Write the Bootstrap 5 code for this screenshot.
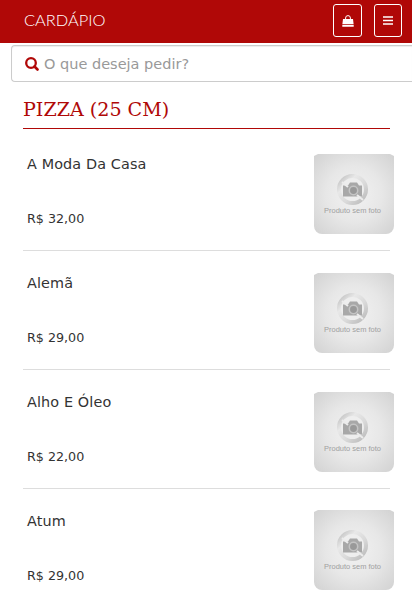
<!DOCTYPE html>
<html lang="pt-BR">
<head>
<meta charset="utf-8">
<meta name="viewport" content="width=device-width, initial-scale=1">
<title>Cardápio</title>
<link href="https://cdn.jsdelivr.net/npm/bootstrap@5.3.0/dist/css/bootstrap.min.css" rel="stylesheet">
<style>
  body { font-family: "DejaVu Sans", sans-serif; color: #333; overflow: hidden; height: 596px; }
  .topbar { background: #b00807; height: 43px; padding: 4px 10px 0 24px; }
  .tool-btn { height: 33px; border: 1px solid #fff; border-radius: 3px; padding: 0; }
  .tool-bag { width: 29px; }
  .tool-menu { width: 28px; }
  .search-box { margin: 2px 0 0 11px; height: 37px; border: 1px solid #ccc; border-right: 0; border-radius: 4px 0 0 4px; padding-left: 13px; box-shadow: inset 0 1px 1px rgba(0,0,0,.075); }
  .search-box input { font-size: 14.5px; color: #999; height: 33px; padding: 0 0 0 5px; line-height: 20px; }
  .search-box input::placeholder { color: #999; opacity: 1; }
  .menu-list { margin: 13px 22px 0 23px; }
  .group-title { font: 400 19.1px/29px "DejaVu Serif", serif; color: #b00807; height: 34px; border-bottom: 1px solid #b00807; margin: 0; }
  .dish { height: 119px; border-bottom: 1px solid #ddd; padding: 22px 0 0 4px; }
  .dish:first-of-type { height: 122px; padding-top: 25px; }
  .dish:last-of-type { padding-top: 21px; }
  .dish:last-of-type .dish-name { margin-top: 1px; }
  .dish-name { font-size: 14.4px; line-height: 20px; letter-spacing: .12px; }
  .dish-price { font-size: 12.7px; line-height: 18px; margin-top: 36px; }
  .dish-photo { width: 80px; height: 80px; margin-right: -4px; }
</style>
</head>
<body class="bg-white">
<svg class="position-absolute" width="0" height="0">
  <defs>
    <radialGradient id="bg" cx=".5" cy=".5" r=".7"><stop offset="0" stop-color="#f2f2f2"/><stop offset=".5" stop-color="#e7e7e7"/><stop offset="1" stop-color="#d2d2d2"/></radialGradient>
    <linearGradient id="ring" x1="0" y1="0" x2="1" y2="1"><stop offset="0" stop-color="#bcbcbc"/><stop offset=".3" stop-color="#e8e8e8"/><stop offset=".6" stop-color="#dadada"/><stop offset="1" stop-color="#b8b8b8"/></linearGradient>
    <filter id="soft"><feGaussianBlur stdDeviation=".5"/></filter>
  </defs>
  <symbol id="nophoto" viewBox="0 0 80 80">
    <path d="M4 0h72l4 2v70a8 8 0 0 1-8 8H8a8 8 0 0 1-8-8V2z" fill="url(#bg)"/>
    <g filter="url(#soft)">
      <circle cx="38.5" cy="35.5" r="13.5" fill="#eee" stroke="url(#ring)" stroke-width="4"/>
      <path d="M29 31.500h5l2-3h7l2 3h3v11H29z" fill="#a8a8a8"/>
      <circle cx="39.500" cy="36.500" r="4.200" fill="#999" stroke="#c4c4c4" stroke-width="1.500"/>
      <path d="M28 28l6 5M43 41l6 5" stroke="#ececec" stroke-width="2"/>
    </g>
    <text x="10" y="58.500" font-family="Liberation Sans, sans-serif" font-size="7.300" fill="#a0a0a0" textLength="57" lengthAdjust="spacingAndGlyphs">Produto sem foto</text>
  </symbol>
</svg>

<header class="topbar d-flex align-items-start">
  <svg class="me-auto" width="84" height="33" role="img" aria-label="Cardápio"><text x="0" y="22.200" font-family="Lato, sans-serif" font-weight="300" font-size="15" fill="#fff" textLength="81.500" lengthAdjust="spacingAndGlyphs">CARDÁPIO</text></svg>
  <button class="tool-btn tool-bag bg-transparent d-flex justify-content-center align-items-center me-2" aria-label="Sacola">
    <svg width="12" height="12" viewBox="0 0 12 12"><path d="M1 4h10l.6 5H.4zM.3 9.700h11.400V11.700H.3z" fill="#fff"/><path d="M3.600 5.500V3a2.400 2.400 0 0 1 4.800 0v2.500" fill="none" stroke="#fff"/></svg>
  </button>
  <button class="tool-btn tool-menu bg-transparent d-flex justify-content-center align-items-center ms-1" aria-label="Menu">
    <svg width="10" height="9" viewBox="0 0 10 9"><path d="M0 1h10M0 4.500h10M0 8h10" stroke="#fff" stroke-width="1.700"/></svg>
  </button>
</header>

<div class="search-box d-flex align-items-center">
  <svg class="flex-shrink-0" width="14" height="14" viewBox="0 0 14 14"><circle cx="6" cy="6" r="4.800" fill="none" stroke="#b00807" stroke-width="2.300"/><path d="M9.500 9.500l3 3" stroke="#b00807" stroke-width="2.600" stroke-linecap="round"/></svg>
  <input class="form-control border-0 bg-transparent shadow-none" type="text" placeholder="O que deseja pedir?">
</div>

<main class="menu-list">
  <h2 class="group-title">PIZZA (25 CM)</h2>
  <div class="dish d-flex justify-content-between"><div><div class="dish-name">A Moda Da Casa</div><div class="dish-price">R$ 32,00</div></div><svg class="dish-photo"><use href="#nophoto"/></svg></div>
  <div class="dish d-flex justify-content-between"><div><div class="dish-name">Alemã</div><div class="dish-price">R$ 29,00</div></div><svg class="dish-photo"><use href="#nophoto"/></svg></div>
  <div class="dish d-flex justify-content-between"><div><div class="dish-name">Alho E Óleo</div><div class="dish-price">R$ 22,00</div></div><svg class="dish-photo"><use href="#nophoto"/></svg></div>
  <div class="dish d-flex justify-content-between"><div><div class="dish-name">Atum</div><div class="dish-price">R$ 29,00</div></div><svg class="dish-photo"><use href="#nophoto"/></svg></div>
</main>
<script src="https://cdn.jsdelivr.net/npm/bootstrap@5.3.0/dist/js/bootstrap.bundle.min.js"></script>
</body>
</html>
